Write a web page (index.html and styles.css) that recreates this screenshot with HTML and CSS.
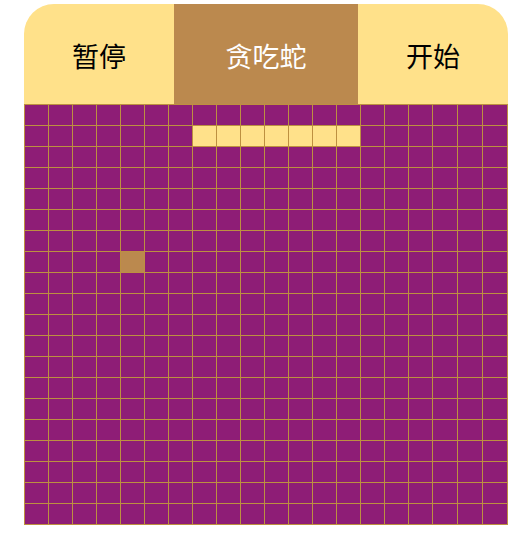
FILE: index.html
```html
<!DOCTYPE html>
<html lang="zh">
<head>
<meta charset="utf-8">
<title>贪吃蛇</title>
<link rel="stylesheet" href="styles.css">
</head>
<body>
<div class="game">
  <div class="header">
    <div class="tab tab-side">暂停</div>
    <div class="tab tab-title">贪吃蛇</div>
    <div class="tab tab-side">开始</div>
  </div>
  <div class="board" id="board"></div>
</div>
<script src="script.js"></script>
</body>
</html>
```

FILE: styles.css
```css
html, body {
  margin: 0;
  padding: 0;
  background: #ffffff;
}

.game {
  width: 484px;
  margin: 4px 0 0 24px;
  font-family: "Noto Sans CJK SC", "Noto Sans", sans-serif;
}

.header {
  display: flex;
  height: 100px;
  background: #ffe18a;
  border-radius: 30px 30px 0 0;
  overflow: hidden;
}

.tab {
  display: flex;
  align-items: center;
  justify-content: center;
  font-size: 27px;
  padding-top: 2px;
  box-sizing: border-box;
}

.tab-side {
  width: 150px;
  color: #000000;
}

.tab-title {
  width: 184px;
  background: #bb894e;
  color: #ffffff;
}

.board {
  display: grid;
  grid-template-columns: repeat(17, 23px) repeat(3, 24px);
  grid-auto-rows: 20px;
  gap: 1px;
  padding: 1px;
  background: #bd9040;
}

.cell {
  background: #8e1d76;
}

.cell.snake {
  background: #ffe18a;
}

.cell.food {
  background: #bb894e;
}
```

FILE: script.js
```js
var board = document.getElementById('board');
var snake = [];
for (var c = 7; c <= 13; c++) snake.push('1-' + c);
var food = '7-4';
for (var r = 0; r < 20; r++) {
  for (var c2 = 0; c2 < 20; c2++) {
    var d = document.createElement('div');
    var key = r + '-' + c2;
    d.className = 'cell' + (snake.indexOf(key) >= 0 ? ' snake' : '') + (key === food ? ' food' : '');
    board.appendChild(d);
  }
}
```
